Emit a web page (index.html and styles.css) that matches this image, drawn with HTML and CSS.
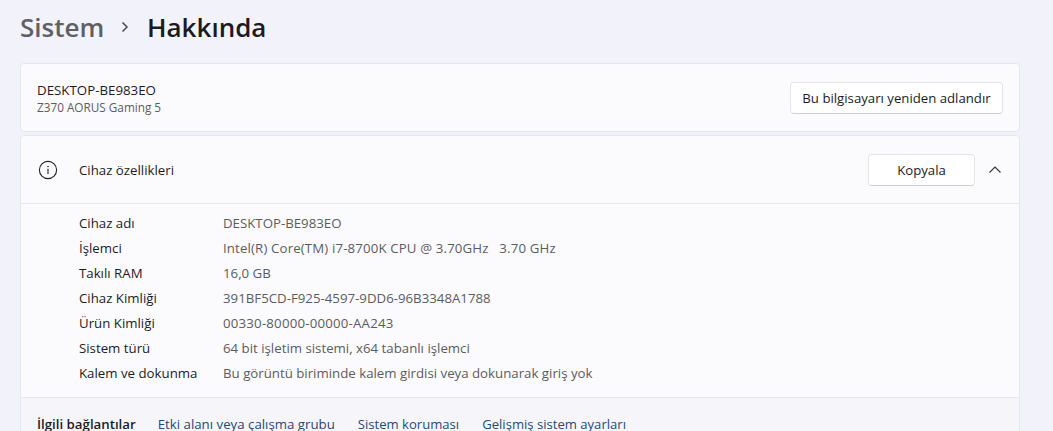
FILE: index.html
```html
<!DOCTYPE html>
<html lang="tr">
<head>
<meta charset="utf-8">
<title>Hakkında</title>
<link rel="stylesheet" href="styles.css">
</head>
<body>
<main class="page">
  <header class="crumbs">
    <span class="crumb-parent">Sistem</span>
    <svg class="crumb-sep" width="10" height="12" viewBox="0 0 10 12"><path d="M2.500 1.500 7 6 2.500 10.500" fill="none" stroke="#4a4a4f" stroke-width="1.500"/></svg>
    <h1 class="crumb-current">Hakkında</h1>
  </header>
  <section class="card name-card">
    <div class="name-text">
      <div class="device-name">DESKTOP-BE983EO</div>
      <div class="device-model">Z370 AORUS Gaming 5</div>
    </div>
    <button class="btn btn-rename">Bu bilgisayarı yeniden adlandır</button>
  </section>
  <section class="card specs-card">
    <div class="specs-head">
      <svg class="info-icon" width="20" height="20" viewBox="0 0 20 20"><circle cx="10" cy="10" r="8.600" fill="none" stroke="#222" stroke-width="1.100"/><path d="M10 8.800V14" stroke="#222" stroke-width="1.100"/><circle cx="10" cy="6.500" r=".8" fill="#222"/></svg>
      <span class="specs-title">Cihaz özellikleri</span>
      <button class="btn btn-copy">Kopyala</button>
      <svg class="chevron" width="14" height="10" viewBox="0 0 14 10"><path d="M1.500 7.500 7 2l5.500 5.500" fill="none" stroke="#333" stroke-width="1.100"/></svg>
    </div>
    <dl class="specs">
      <dt>Cihaz adı</dt><dd>DESKTOP-BE983EO</dd>
      <dt>İşlemci</dt><dd class="wide-cpu">Intel(R) Core(TM) i7-8700K CPU @ 3.70GHz &nbsp; 3.70 GHz</dd>
      <dt>Takılı RAM</dt><dd>16,0 GB</dd>
      <dt>Cihaz Kimliği</dt><dd>391BF5CD-F925-4597-9DD6-96B3348A1788</dd>
      <dt>Ürün Kimliği</dt><dd class="wide-key">00330-80000-00000-AA243</dd>
      <dt>Sistem türü</dt><dd>64 bit işletim sistemi, x64 tabanlı işlemci</dd>
      <dt>Kalem ve dokunma</dt><dd>Bu görüntü biriminde kalem girdisi veya dokunarak giriş yok</dd>
    </dl>
    <nav class="related">
      <strong class="related-title">İlgili bağlantılar</strong>
      <a class="link link-wide">Etki alanı veya çalışma grubu</a>
      <a class="link">Sistem koruması</a>
      <a class="link">Gelişmiş sistem ayarları</a>
    </nav>
  </section>
</main>
</body>
</html>
```
FILE: styles.css
```css
* { box-sizing: border-box; }
html, body { height: 100%; }
body {
  margin: 0;
  background: #f2f3fa;
  font-family: "Open Sans", "Noto Sans", sans-serif;
  font-size: 13.250px;
  color: #1b1b1f;
  overflow: hidden;
}
.page { padding: 9px 33px 0 20px; height: 431px; overflow: hidden; }
.crumbs { display: flex; align-items: center; height: 36px; margin-bottom: 18px; }
.crumb-parent { font-size: 26px; font-weight: 600; color: #5f5f64; width: 100px; }
.crumb-sep { margin-left: 0; }
.crumb-current { margin: 0 0 0 17px; font-size: 26px; font-weight: 600; color: #1b1b1f; }
.card { background: #fbfbfe; border: 1px solid #e6e7ee; border-radius: 4px; }
.name-card { height: 69px; display: flex; align-items: center; justify-content: space-between; padding: 0 16px; margin-bottom: 3px; }
.device-name { font-size: 13.300px; line-height: 18px; }
.device-model { font-size: 11.750px; line-height: 16px; color: #5c5c60; }
.btn { font: inherit; font-size: 13.200px; color: #1b1b1f; background: #fff; border: 1px solid #e4e4e8; border-bottom-color: #d0d0d4; border-radius: 4px; height: 32px; }
.btn-rename { width: 213px; padding: 0; }
.specs-head { height: 68px; display: flex; align-items: center; padding: 0 17px; border-bottom: 1px solid #e6e7ee; }
.info-icon { flex: none; }
.specs-title { margin-left: 21px; flex: 1; }
.btn-copy { width: 107px; }
.chevron { margin-left: 13px; }
.specs { margin: 0; padding: 6px 0 12px 58px; display: grid; grid-template-columns: 144px 1fr; grid-auto-rows: 25px; align-items: center; border-bottom: 1px solid #e6e7ee; }
.specs dt { color: #1b1b1f; }
.specs dd { margin: 0; color: #5c5c60; }
.specs .wide-cpu { letter-spacing: .14px; }
.specs .wide-key { letter-spacing: .2px; }
.related { display: flex; align-items: center; background: #f6f6fa; height: 52px; padding: 0 16px; }
.related-title { font-weight: 600; margin-right: 22px; }
.link { color: #234a78; margin-right: 23px; font-size: 13.100px; }
.link-wide { font-size: 13.250px; }
```
